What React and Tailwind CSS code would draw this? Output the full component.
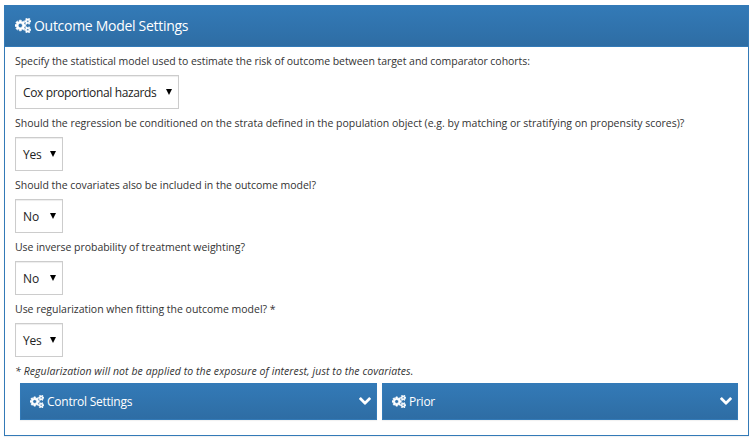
const questions = [
  { text: "Specify the statistical model used to estimate the risk of outcome between target and comparator cohorts:", value: "Cox proportional hazards", w: "w-[164px]", track: "tracking-[-0.045px]", valueTrack: "tracking-[-0.36px]" },
  { text: "Should the regression be conditioned on the strata defined in the population object (e.g. by matching or stratifying on propensity scores)?", value: "Yes", w: "w-12", track: "tracking-[-0.013px]", valueTrack: "tracking-[-0.2px]" },
  { text: "Should the covariates also be included in the outcome model?", value: "No", w: "w-12", track: "tracking-[-0.03px]", valueTrack: "tracking-[-0.12px]" },
  { text: "Use inverse probability of treatment weighting?", value: "No", w: "w-12", track: "tracking-[-0.03px]", valueTrack: "tracking-[-0.12px]" },
  { text: "Use regularization when fitting the outcome model? *", value: "Yes", w: "w-12", track: "tracking-[-0.02px]", valueTrack: "tracking-[-0.2px]" },
];

const smallGear =
  "v140q0 16-149 31-12 27-30 52 51 113 51 138 0 4-4 7-122 71-124 71-8 0-46-47t-52-68q-20 2-30 2t-30-2q-14 21-52 68t-46 47q-2 0-124-71-4-3-4-7 0-25 51-138-18-25-30-52-149-15-149-31v-140q0-16 149-31 13-29 30-52-51-113-51-138 0-4 4-7 4-2 35-20t59-34 30-16q8 0 46 46.5t52 67.5q20-2 30-2t30 2q51-71 92-112l6-2q4 0 124 70 4 3 4 7 0 25-51 138 17 23 30 52 149 15 149 31z";

const cogs =
  "M896 896q0-106-75-181t-181-75-181 75-75 181 75 181 181 75 181-75 75-181zm768 512q0-52-38-90t-90-38-90 38-38 90q0 53 37.5 90.5t90.5 37.5 90.5-37.5 37.5-90.5zm0-1024q0-52-38-90t-90-38-90 38-38 90q0 53 37.5 90.5t90.5 37.5 90.5-37.5 37.5-90.5zm-384 421v185q0 10-7 19.5t-16 10.5l-155 24q-11 35-32 76 34 48 90 115 7 11 7 20 0 12-7 19-23 30-82.5 89.5t-78.5 59.5q-11 0-21-7l-115-90q-37 19-77 31-11 108-23 155-7 24-30 24h-186q-11 0-20-7.5t-10-17.5l-23-153q-34-10-75-31l-118 89q-7 7-20 7-11 0-21-8-144-133-144-160 0-9 7-19 10-14 41-53t47-61q-23-44-35-82l-152-24q-10-1-17-9.5t-7-19.5v-185q0-10 7-19.5t16-10.5l155-24q11-35 32-76-34-48-90-115-7-11-7-20 0-12 7-20 22-30 82-89t79-59q11 0 21 7l115 90q34-18 77-32 11-108 23-154 7-24 30-24h186q11 0 20 7.5t10 17.5l23 153q34 10 75 31l118-89q8-7 20-7 11 0 21 8 144 133 144 160 0 8-7 19-12 16-42 54t-45 60q23 48 34 82l152 23q10 2 17 10.5t7 19.5z" +
  "M1920 1338" + smallGear + "M1920 314" + smallGear;

function Cogs({ className }) {
  return (
    <svg viewBox="0 0 1920 1792" className={className} fill="currentColor" stroke="currentColor" strokeWidth="75">
      <path fillRule="evenodd" d={cogs} />
    </svg>
  );
}

export default function App() {
  return (
    <div className="h-[442px] w-[753px] bg-white pl-1 pt-[5px] font-['Open_Sans',sans-serif] text-[#333]">
      <div className="h-[431px] w-[745px] border border-[#337ab7] shadow-[0_1px_1px_rgba(0,0,0,0.05)]">
        <div className="flex h-[41px] items-center border-b border-[#337ab7] bg-linear-to-b from-[#337ab7] to-[#2e6da4] pl-[10px] text-white">
          <Cogs className="mb-px mr-[3px] h-[15px] w-4" />
          <span className="mb-[2px] text-[14px] tracking-[-0.29px]">Outcome Model Settings</span>
        </div>
        <div className="px-[10px] pt-[5px]">
          {questions.map((q) => (
            <div key={q.text} className="h-[62px]">
              <div className={`h-[23px] whitespace-nowrap text-[10.5px] leading-[19px] ${q.track}`}>{q.text}</div>
              <div className={`flex h-[34px] items-center justify-between whitespace-nowrap border border-[#ccc] pl-[7px] pr-[6px] text-[12px] text-[#222] shadow-[inset_0_1px_1px_rgba(0,0,0,0.075)] ${q.w}`}>
                <span className={`pt-px ${q.valueTrack}`}>{q.value}</span>
                <span className="h-0 w-0 border-x-[3px] border-t-[6px] border-x-transparent border-t-black" />
              </div>
            </div>
          ))}
          <div className="h-[21px] whitespace-nowrap text-[10.5px] italic leading-[19px] tracking-[0.08px]">* Regularization will not be applied to the exposure of interest, just to the covariates.</div>
        </div>
        <div className="flex gap-[5px] pl-[15px]">
          {["Control Settings", "Prior"].map((t) => (
            <div key={t} className="h-[37px] w-[357px] border border-[#337ab7] bg-linear-to-b from-[#337ab7] to-[#2e6da4] pl-[9px] pr-[5px] text-white shadow-[0_1px_1px_rgba(0,0,0,0.05)] last:w-[356px]">
              <div className="flex h-[35px] items-center">
                <Cogs className="mr-[3px] h-[13px] w-[14px]" />
                <span className="pt-px text-[12px] tracking-[-0.25px]">{t}</span>
                <svg viewBox="90 533 1612 1035" className="mb-px ml-auto h-2 w-3" fill="currentColor">
                  <path d="M1683 808l-742 741q-19 19-45 19t-45-19l-742-741q-19-19-19-45.5t19-45.5l166-165q19-19 45-19t45 19l531 531 531-531q19-19 45-19t45 19l166 165q19 19 19 45.5t-19 45.5z" />
                </svg>
              </div>
            </div>
          ))}
        </div>
      </div>
    </div>
  );
}
